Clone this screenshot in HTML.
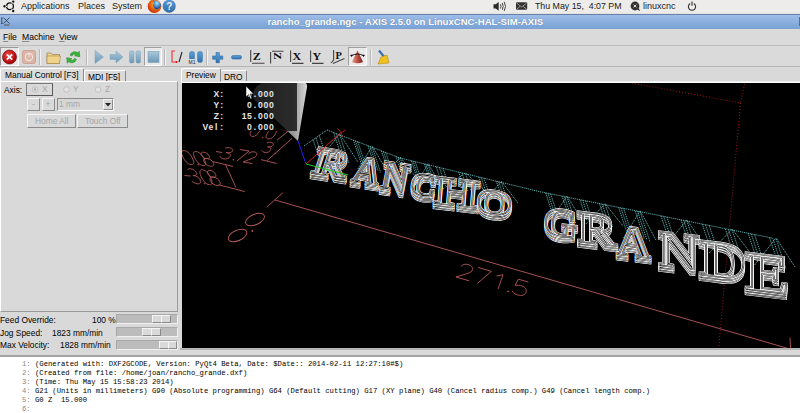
<!DOCTYPE html>
<html><head><meta charset="utf-8">
<style>
*{margin:0;padding:0;box-sizing:border-box}
html,body{width:800px;height:413px;overflow:hidden;background:#d9d9d9;font-family:"Liberation Sans",sans-serif;position:relative}
.a{position:absolute;white-space:nowrap}
#panel{left:0;top:0;width:800px;height:14px;background:linear-gradient(#edecea 85%,#e2e0dc)}
#title{left:0;top:14px;width:800px;height:15px;background:linear-gradient(#9dbde8,#79a1d5);border-top:1px solid #6580aa}
#menu{left:0;top:29px;width:800px;height:17px;background:#dadada;border-bottom:1px solid #bdbdbd}
.pt{font-size:9px;color:#1a1a1a;top:0.6px}
.mt{font-size:8.6px;color:#000;top:3px}
.mt u{text-decoration:underline;text-decoration-color:#8a8a8a;text-underline-offset:1px}
#tb{left:0;top:46px;width:800px;height:21px;background:#dadada;border-bottom:1px solid #b5b5b5}
.sep{width:1px;height:16px;top:49px;background:#b8b8b8;border-right:1px solid #f4f4f4}
#code{left:0;top:357px;width:800px;height:56px;background:#fff}
.cl{white-space:pre;font-family:"Liberation Mono",monospace;font-size:7.23px;color:#000;left:35px;transform:scaleY(1.1);transform-origin:0 70%}
.ln{font-family:"Liberation Mono",monospace;font-size:7.23px;color:#888;left:22px;transform:scaleY(1.1);transform-origin:0 70%}
.tt{font-size:8.4px;color:#000}
.tg{font-size:8.4px;color:#a6a6a6}
.btn{border:1px solid;border-color:#f4f4f4 #8a8a8a #8a8a8a #f4f4f4;background:#d9d9d9}
.trough{background:#bcbcbc;border:1px solid;border-color:#a8a8a8 #f0f0f0 #f0f0f0 #a8a8a8}
.handle{background:#d9d9d9;border:1px solid;border-color:#f4f4f4 #8a8a8a #8a8a8a #f4f4f4}
</style></head><body>
<div id="panel" class="a"></div>
<div class="a pt" style="left:21px">Applications</div>
<div class="a pt" style="left:78px">Places</div>
<div class="a pt" style="left:112px">System</div>
<div class="a pt" style="left:535px;font-size:8.8px;top:0.8px">Thu May 15,&nbsp; 4:07 PM</div>
<div class="a pt" style="left:643px">linuxcnc</div>
<div id="title" class="a"></div>
<div class="a" style="left:267.5px;top:16px;font-size:9.6px;font-weight:bold;color:#fff;text-shadow:0 0 1px rgba(40,60,100,0.5)">rancho_grande.ngc - AXIS 2.5.0 on LinuxCNC-HAL-SIM-AXIS</div>

<svg class="a" style="left:0;top:0" width="800" height="30">
<defs>
<radialGradient id="ff" cx="0.6" cy="0.35" r="0.7"><stop offset="0" stop-color="#ffd040"/><stop offset="0.5" stop-color="#f07010"/><stop offset="1" stop-color="#c02808"/></radialGradient>
<radialGradient id="gl" cx="0.5" cy="0.3" r="0.6"><stop offset="0" stop-color="#a0e8ff"/><stop offset="1" stop-color="#2050a0"/></radialGradient>
<linearGradient id="hb" x1="0" y1="0" x2="0" y2="1"><stop offset="0" stop-color="#5a9ad6"/><stop offset="1" stop-color="#2e6aa8"/></linearGradient>
</defs>
<circle cx="10" cy="6.3" r="3.4" fill="none" stroke="#111" stroke-width="1.3"/>
<circle cx="4.6" cy="6.3" r="1.2" fill="#111"/><circle cx="13.2" cy="1.6" r="1.2" fill="#111"/><circle cx="13.2" cy="11" r="1.2" fill="#111"/>
<path d="M7 6.3 h-1.3 M11.7 3.6 l0.7 -1.2 M11.7 9 l0.7 1.2" stroke="#edecea" stroke-width="1.2"/>
<circle cx="154.5" cy="6.2" r="6.8" fill="url(#ff)"/>
<path d="M153 0.5 Q161 0 161 6 Q160 9 157 9.5 Q154 9 153.5 6.5 Q152 5 154 3.5z" fill="url(#gl)"/>
<circle cx="169.2" cy="6.2" r="6.5" fill="url(#hb)"/>
<text x="169.2" y="10.3" text-anchor="middle" font-family="Liberation Sans" font-weight="bold" font-size="10" fill="#e8f0f8">?</text>
<path d="M493.5 4.3 h2.2 l3 -2.2 v8.6 l-3 -2.2 h-2.2z" fill="#2a2a2a"/>
<path d="M500.5 4.3 q1 2 0 4.2 M502.3 3 q1.8 3.4 0 6.8 M504.2 1.8 q2.6 4.6 0 9.2" fill="none" stroke="#333" stroke-width="0.9"/>
<rect x="516" y="2.2" width="11.2" height="7.6" rx="1" fill="#333"/>
<path d="M516.5 3 l5.1 4 l5.1 -4 M516.5 9.3 l3.6 -3 M526.7 9.3 l-3.6 -3" fill="none" stroke="#bbb" stroke-width="0.7"/>
<circle cx="635" cy="6" r="4.4" fill="#333"/><path d="M637 9.5 l3 1.5 l-1.2 -3z" fill="#333"/>
<path d="M633.6 4.6 l2.8 2.8 M636.4 4.6 l-2.8 2.8" stroke="#eee" stroke-width="0.9"/>
<path d="M690.2 3.6 a3.6 3.6 0 1 0 3.6 0" fill="none" stroke="#333" stroke-width="1.1"/><path d="M692 1.6 v4.2" stroke="#333" stroke-width="1.1"/>
<path d="M1.8 18 v5.5 M1 18 h1.6 M1 23.5 h1.6" stroke="#444" stroke-width="0.9"/>
<path d="M3.5 17.6 L9.5 23.6 M9.5 17.6 L3.5 23.6" stroke="#333" stroke-width="0.8"/>
<path d="M4 25 h5.5" stroke="#555" stroke-width="1"/>
</svg>
<div class="a" style="left:799px;top:17px;width:1px;height:9px;background:#4f6f9f"></div>
<div id="menu" class="a"></div>
<div class="a mt" style="left:3px;top:32px"><u>F</u>ile</div>
<div class="a mt" style="left:22px;top:32px"><u>M</u>achine</div>
<div class="a mt" style="left:59px;top:32px"><u>V</u>iew</div>
<div id="tb" class="a"></div>

<!-- toolbar -->
<div class="a" style="left:0;top:47px;width:19px;height:19px;border:1px solid;border-color:#9a9a9a #fff #fff #9a9a9a;background:#e6e6e6"></div>
<svg class="a" style="left:0;top:46px" width="400" height="21" viewBox="0 46 400 21">
<defs>
<radialGradient id="rg" cx="0.4" cy="0.35" r="0.7"><stop offset="0" stop-color="#f04040"/><stop offset="1" stop-color="#a00000"/></radialGradient>
<linearGradient id="bl" x1="0" y1="0" x2="0" y2="1"><stop offset="0" stop-color="#a9c8dc"/><stop offset="1" stop-color="#6d98b6"/></linearGradient>
<linearGradient id="bp" x1="0" y1="0" x2="0" y2="1"><stop offset="0" stop-color="#5aa0d8"/><stop offset="1" stop-color="#2f72b0"/></linearGradient>
<linearGradient id="fd" x1="0" y1="0" x2="0" y2="1"><stop offset="0" stop-color="#f3dca0"/><stop offset="1" stop-color="#c9a050"/></linearGradient>
<linearGradient id="cone" x1="0" y1="0" x2="1" y2="0"><stop offset="0" stop-color="#e0a090"/><stop offset="0.5" stop-color="#c05040"/><stop offset="1" stop-color="#702020"/></linearGradient>
</defs>
<!-- estop -->
<circle cx="9.5" cy="57" r="7" fill="url(#rg)" stroke="#600" stroke-width="0.6"/>
<path d="M6.8 54.3 L12.2 59.7 M12.2 54.3 L6.8 59.7" stroke="#fff" stroke-width="1.8"/>
<!-- power -->
<rect x="22.5" y="50.5" width="13" height="13" rx="2" fill="#dcb5a8" stroke="#c9a396"/>
<circle cx="29" cy="57" r="3.6" fill="none" stroke="#f3e3dd" stroke-width="1.1"/>
<path d="M29 53.3 V57.3" stroke="#f3e3dd" stroke-width="1.1"/>
<!-- sep -->
<rect x="39" y="49" width="1" height="16" fill="#b8b8b8"/><rect x="40" y="49" width="1" height="16" fill="#f2f2f2"/>
<!-- folder -->
<path d="M47 53 h4 l1.5 1.5 h7 v9 h-12.5z" fill="url(#fd)" stroke="#9a7a3a" stroke-width="0.7"/>
<path d="M47 56 h13.5 l-1 7.5 h-12.5z" fill="#f0d48c" stroke="#9a7a3a" stroke-width="0.5"/>
<!-- reload -->
<path d="M70 55 a5 5 0 0 1 8 -2 l1.2 -1.8 l0.6 5.6 l-5.2 -1 l1.6 -1.3 a3 3 0 0 0 -4.3 1.6z" fill="#3ab83a" stroke="#1a7a1a" stroke-width="0.5"/>
<path d="M76.5 59.5 a5 5 0 0 1 -8 2 l-1.2 1.8 l-0.6 -5.6 l5.2 1 l-1.6 1.3 a3 3 0 0 0 4.3 -1.6z" fill="#3ab83a" stroke="#1a7a1a" stroke-width="0.5"/>
<rect x="86" y="49" width="1" height="16" fill="#b8b8b8"/><rect x="87" y="49" width="1" height="16" fill="#f2f2f2"/>
<!-- play -->
<path d="M95 50.5 L103.5 57 L95 63.5z" fill="url(#bl)" stroke="#7aa0b8" stroke-width="0.5"/>
<!-- step arrow -->
<path d="M110 54.5 h6 v-3.5 l7 6 l-7 6 v-3.5 h-6z" fill="url(#bl)" stroke="#7aa0b8" stroke-width="0.5"/>
<!-- pause -->
<rect x="129.5" y="51" width="4.5" height="12" rx="1.2" fill="url(#bl)" stroke="#7aa0b8" stroke-width="0.5"/>
<rect x="136" y="51" width="4.5" height="12" rx="1.2" fill="url(#bl)" stroke="#7aa0b8" stroke-width="0.5"/>
<!-- stop sunken -->
<rect x="144.5" y="47.5" width="17" height="18" fill="#eaeaea" stroke="#a0a0a0"/>
<path d="M161.5 47.5 V65.5 H144.5" fill="none" stroke="#fff"/>
<rect x="148" y="51.5" width="11" height="11" fill="url(#bl)" stroke="#7aa0b8" stroke-width="0.6"/>
<rect x="164" y="49" width="1" height="16" fill="#b8b8b8"/><rect x="165" y="49" width="1" height="16" fill="#f2f2f2"/>
<!-- block delete -->
<path d="M175 51 h-3 v11 h4" fill="none" stroke="#f03030" stroke-width="1.1"/>
<circle cx="176.5" cy="62" r="1" fill="#e00"/>
<path d="M179 62 L182 52" stroke="#222" stroke-width="1.1"/>
<!-- M1 -->
<rect x="189.5" y="51.5" width="5" height="10" rx="2" fill="url(#bp)" stroke="#3a78b0" stroke-width="0.5"/>
<rect x="197.5" y="51.5" width="5" height="11" rx="2" fill="url(#bp)" stroke="#3a78b0" stroke-width="0.5"/>
<rect x="188.5" y="59" width="8.5" height="5" fill="#dadada"/>
<text x="188.6" y="63.6" font-size="5" font-family="Liberation Sans" fill="#222">M1</text>
<rect x="206" y="49" width="1" height="16" fill="#b8b8b8"/><rect x="207" y="49" width="1" height="16" fill="#f2f2f2"/>
<!-- plus -->
<path d="M216 52.5 h3.4 v3.4 h3.4 v3.4 h-3.4 v3.4 h-3.4 v-3.4 h-3.4 v-3.4 h3.4z" fill="url(#bp)" stroke="#24609a" stroke-width="0.5" stroke-linejoin="round"/>
<!-- minus -->
<rect x="231.5" y="55.5" width="10" height="3.6" rx="1.5" fill="url(#bp)" stroke="#24609a" stroke-width="0.5"/>
<g fill="none" stroke="#444" stroke-width="1.1">
<path d="M250.7 50 V62 M252 63.3 H264.5"/>
<path d="M270.6 52 V63.5 M272 51.3 H283.5"/>
<path d="M290.6 50.5 V62 M292 63.4 H303.5"/>
<path d="M310.6 50.5 V62 M312 63.4 H323.5"/>
<path d="M333.6 50 V60 L331 63"/>
<path d="M333 63.5 L344.5 58.5"/>
</g>
<g font-family="Liberation Serif" font-weight="bold" fill="#111">
<text x="252.8" y="60.4" font-size="12px" transform="translate(252.8 60.4) scale(1.0 0.95) translate(-252.8 -60.4)">Z</text>
<text x="272.2" y="61" font-size="11px" transform="rotate(90 277.5 57.5)">Z</text>
<text x="292.4" y="60.4" font-size="12px" transform="translate(292.4 60.4) scale(1.0 0.95) translate(-292.4 -60.4)">X</text>
<text x="312.4" y="60.4" font-size="12px" transform="translate(312.4 60.4) scale(1.0 0.95) translate(-312.4 -60.4)">Y</text>
<text x="335.5" y="59.5" font-size="11px" transform="translate(335.5 59.5) scale(0.95 0.93) translate(-335.5 -59.5)">P</text>
</g>
<!-- rotate view sunken -->
<rect x="348.5" y="47.5" width="18" height="18" fill="#eaeaea" stroke="#a0a0a0"/>
<path d="M366.5 47.5 V65.5 H348.5" fill="none" stroke="#fff"/>
<path d="M357.5 50.5 L363 62 Q357.5 64.5 352 62z" fill="url(#cone)"/>
<path d="M351 56 Q357.5 52 364 56" fill="none" stroke="#111" stroke-width="1"/>
<path d="M350 55 l1.5 2 l1 -2.5z M365 55 l-1.5 2 l-1 -2.5z" fill="#111"/>
<rect x="370" y="49" width="1" height="16" fill="#b8b8b8"/><rect x="371" y="49" width="1" height="16" fill="#f2f2f2"/>
<!-- clear -->
<path d="M379 50.5 L385 58" stroke="#3a70b0" stroke-width="2.2"/>
<path d="M381 57 L387 55 L389 63 L378 64z" fill="#f0c020" stroke="#b08000" stroke-width="0.5"/>
</svg>

<!-- tabs left -->
<div class="a" style="left:0;top:68px;width:84px;height:14px;background:#dcdcdc;border:1px solid;border-color:#fff #8a8a8a #d9d9d9 #fff;border-radius:2px 2px 0 0"></div>
<div class="a tt" style="left:5px;top:70px">Manual Control [F3]</div>
<div class="a" style="left:84px;top:70px;width:42px;height:12px;border:1px solid;border-color:#fff #8a8a8a #fff #fff;border-bottom:none;border-radius:2px 2px 0 0"></div>
<div class="a tt" style="left:88px;top:72px">MDI [F5]</div>
<!-- left panel frame -->
<div class="a" style="left:0;top:81px;width:178px;height:231px;border:1px solid;border-color:#fff #9a9a9a #9a9a9a #fff"></div>
<div class="a tt" style="left:4px;top:84.5px">Axis:</div>
<div class="a" style="left:26px;top:83px;width:27px;height:13px;border:1px solid #7a7a7a;border-right-color:#5a5a5a;border-bottom-color:#5a5a5a"></div>
<svg class="a" style="left:0;top:80px" width="180" height="50" viewBox="0 80 180 50">
<circle cx="35" cy="89.5" r="2.8" fill="#e4e4e4" stroke="#b8b8b8" stroke-width="0.8"/><circle cx="35" cy="89.5" r="1.2" fill="#a8a8a8"/>
<circle cx="66.5" cy="89.5" r="2.8" fill="#e4e4e4" stroke="#b8b8b8" stroke-width="0.8"/>
<circle cx="98" cy="89.5" r="2.8" fill="#e4e4e4" stroke="#b8b8b8" stroke-width="0.8"/>
</svg>
<div class="a tg" style="left:42px;top:84px">X</div>
<div class="a tg" style="left:73px;top:84px">Y</div>
<div class="a tg" style="left:105px;top:84px">Z</div>
<div class="a btn" style="left:27px;top:98px;width:13px;height:13px"></div>
<div class="a tg" style="left:32px;top:99px">-</div>
<div class="a btn" style="left:42px;top:98px;width:13px;height:13px"></div>
<div class="a tg" style="left:45.5px;top:99px">+</div>
<div class="a" style="left:57px;top:98px;width:57px;height:13px;border:1px solid;border-color:#8a8a8a #fff #fff #8a8a8a;background:#d6d6d6"></div>
<div class="a tg" style="left:59px;top:99px">1 mm</div>
<div class="a btn" style="left:103px;top:99px;width:10px;height:11px"></div>
<svg class="a" style="left:104px;top:102px" width="8" height="5"><path d="M1 1h6l-3 3.5z" fill="#222"/></svg>
<div class="a btn" style="left:27px;top:114px;width:49px;height:14px"></div>
<div class="a tg" style="left:35px;top:115.5px">Home All</div>
<div class="a btn" style="left:77px;top:114px;width:51px;height:14px"></div>
<div class="a tg" style="left:85px;top:115.5px">Touch Off</div>
<!-- sliders -->
<div class="a tt" style="left:0;top:314.6px">Feed Override:</div>
<div class="a tt" style="left:92px;top:314.6px">100 %</div>
<div class="a tt" style="left:0;top:327.6px">Jog Speed:</div>
<div class="a tt" style="left:52px;top:327.6px">1823 mm/min</div>
<div class="a tt" style="left:0;top:340.4px">Max Velocity:</div>
<div class="a tt" style="left:60px;top:340.4px">1828 mm/min</div>
<div class="a trough" style="left:116px;top:314px;width:62px;height:10px"></div>
<div class="a handle" style="left:152px;top:315px;width:10px;height:8px"></div>
<div class="a handle" style="left:161px;top:315px;width:10px;height:8px"></div>
<div class="a trough" style="left:116px;top:327px;width:62px;height:10px"></div>
<div class="a handle" style="left:142px;top:328px;width:10px;height:8px"></div>
<div class="a handle" style="left:151px;top:328px;width:10px;height:8px"></div>
<div class="a trough" style="left:116px;top:340px;width:62px;height:10px"></div>
<div class="a handle" style="left:159px;top:341px;width:10px;height:8px"></div>
<div class="a handle" style="left:168px;top:341px;width:9px;height:8px"></div>
<!-- right tabs -->
<div class="a" style="left:181px;top:68px;width:40px;height:14px;background:#dcdcdc;border:1px solid;border-color:#fff #8a8a8a #dcdcdc #fff;border-radius:3px 2px 0 0"></div>
<div class="a tt" style="left:186px;top:70px">Preview</div>
<div class="a" style="left:221px;top:70px;width:26px;height:12px;border:1px solid;border-color:#fff #8a8a8a #fff #fff;border-bottom:none;border-left:none;border-radius:0 2px 0 0"></div>
<div class="a tt" style="left:224px;top:72px">DRO</div>
<div class="a" style="left:221px;top:81px;width:579px;height:1px;background:#f0f0f0"></div>
<div class="a" style="left:181px;top:82px;width:619px;height:1px;background:#fff"></div>
<!-- sash -->
<div class="a" style="left:180px;top:348px;width:620px;height:2px;background:#b5b5b5"></div>
<div class="a" style="left:0;top:350px;width:800px;height:5px;background:#d9d9d9"></div>
<div class="a" style="left:0;top:355px;width:800px;height:2px;background:#a4a4a4"></div>
<svg class="a" style="left:182px;top:83px;background:#000" width="618" height="265" viewBox="182 83 618 265">
<g stroke="#b85a5a" stroke-width="0.9" fill="none">
<path d="M275 200 L790 349"/>
<path d="M266.7 207.2 L282.9 192.7"/>
<path d="M790 337.7 L790.5 348"/>
</g>
<g stroke="#a01818" stroke-width="1" fill="none" stroke-dasharray="1 2">
<path d="M626 82 L740.5 103 L745 82 M740.5 103 L718.7 348"/>
</g>
<g stroke="#b85a5a" stroke-width="0.9" fill="none"><path transform="matrix(22.000 6.400 5.000 -14.500 456.00 277.00)" d="M0.05 0.75 C0.1 0.95 0.25 1 0.32 1 C0.5 1 0.58 0.88 0.58 0.73 C0.58 0.55 0.4 0.42 0 0 L0.6 0" vector-effect="non-scaling-stroke"/><path transform="matrix(22.000 6.400 5.000 -14.500 473.16 281.99)" d="M0 1 L0.6 1 L0.2 0" vector-effect="non-scaling-stroke"/><path transform="matrix(22.000 6.400 5.000 -14.500 490.32 286.98)" d="M0.1 0.8 L0.35 1 L0.35 0" vector-effect="non-scaling-stroke"/><path transform="matrix(22.000 6.400 5.000 -14.500 501.32 290.18)" d="M0.3 0.02 a0.03 0.03 0 1 0 0.001 0" vector-effect="non-scaling-stroke"/><path transform="matrix(22.000 6.400 5.000 -14.500 511.22 293.06)" d="M0.55 1 L0.1 1 L0.05 0.55 C0.15 0.62 0.25 0.64 0.32 0.64 C0.5 0.64 0.6 0.5 0.6 0.32 C0.6 0.12 0.48 0 0.3 0 C0.15 0 0.05 0.08 0 0.15" vector-effect="non-scaling-stroke"/></g>
<g stroke="#b85a5a" stroke-width="0.9" fill="none"><ellipse cx="237.5" cy="235.5" rx="10" ry="5.2" transform="rotate(-24 237.5 235.5)"/><ellipse cx="255" cy="219.5" rx="10" ry="5.2" transform="rotate(-24 255 219.5)"/></g>
<circle cx="252.3" cy="231" r="0.9" fill="#b85a5a"/>
<g stroke="#b85a5a" stroke-width="0.9" fill="none"><path transform="matrix(15.520 1.280 -7.000 -15.000 188.00 183.00)" d="M0 0.5 L0.4 0.5" vector-effect="non-scaling-stroke"/><path transform="matrix(15.520 1.280 -7.000 -15.000 192.85 183.40)" d="M0.05 0.9 C0.15 1 0.25 1 0.3 1 C0.5 1 0.57 0.88 0.57 0.76 C0.57 0.62 0.45 0.55 0.25 0.55 C0.5 0.55 0.6 0.42 0.6 0.28 C0.6 0.1 0.48 0 0.3 0 C0.15 0 0.05 0.08 0 0.15" vector-effect="non-scaling-stroke"/><path transform="matrix(15.520 1.280 -7.000 -15.000 200.42 184.02)" d="M0.3 0.02 a0.03 0.03 0 1 0 0.001 0" vector-effect="non-scaling-stroke"/><path transform="matrix(15.520 1.280 -7.000 -15.000 204.78 184.38)" d="M0.3 0 C0.05 0 0 0.3 0 0.5 C0 0.7 0.05 1 0.3 1 C0.55 1 0.6 0.7 0.6 0.5 C0.6 0.3 0.55 0 0.3 0Z" vector-effect="non-scaling-stroke"/><path transform="matrix(15.520 1.280 -7.000 -15.000 212.35 185.01)" d="M0.3 0.55 C0.1 0.55 0.05 0.65 0.05 0.77 C0.05 0.92 0.17 1 0.3 1 C0.43 1 0.55 0.92 0.55 0.77 C0.55 0.65 0.5 0.55 0.3 0.55 C0.1 0.55 0 0.42 0 0.28 C0 0.1 0.12 0 0.3 0 C0.48 0 0.6 0.1 0.6 0.28 C0.6 0.42 0.5 0.55 0.3 0.55Z" vector-effect="non-scaling-stroke"/></g>
<g stroke="#b85a5a" stroke-width="0.9" fill="none"><path transform="matrix(15.520 1.280 -7.000 -14.000 186.50 164.20)" d="M0.3 0 C0.05 0 0 0.3 0 0.5 C0 0.7 0.05 1 0.3 1 C0.55 1 0.6 0.7 0.6 0.5 C0.6 0.3 0.55 0 0.3 0Z" vector-effect="non-scaling-stroke"/><path transform="matrix(15.520 1.280 -7.000 -14.000 194.07 164.82)" d="M0.3 0.02 a0.03 0.03 0 1 0 0.001 0" vector-effect="non-scaling-stroke"/><path transform="matrix(15.520 1.280 -7.000 -14.000 198.43 165.18)" d="M0.3 0 C0.05 0 0 0.3 0 0.5 C0 0.7 0.05 1 0.3 1 C0.55 1 0.6 0.7 0.6 0.5 C0.6 0.3 0.55 0 0.3 0Z" vector-effect="non-scaling-stroke"/><path transform="matrix(15.520 1.280 -7.000 -14.000 206.00 165.81)" d="M0.3 0.55 C0.1 0.55 0.05 0.65 0.05 0.77 C0.05 0.92 0.17 1 0.3 1 C0.43 1 0.55 0.92 0.55 0.77 C0.55 0.65 0.5 0.55 0.3 0.55 C0.1 0.55 0 0.42 0 0.28 C0 0.1 0.12 0 0.3 0 C0.48 0 0.6 0.1 0.6 0.28 C0.6 0.42 0.5 0.55 0.3 0.55Z" vector-effect="non-scaling-stroke"/></g>
<g stroke="#b85a5a" stroke-width="0.9" fill="none"><path transform="matrix(15.600 2.600 6.000 -11.000 213.00 157.00)" d="M0 0.5 L0.4 0.5" vector-effect="non-scaling-stroke"/><path transform="matrix(15.600 2.600 6.000 -11.000 219.00 158.00)" d="M0.05 0.9 C0.15 1 0.25 1 0.3 1 C0.5 1 0.57 0.88 0.57 0.76 C0.57 0.62 0.45 0.55 0.25 0.55 C0.5 0.55 0.6 0.42 0.6 0.28 C0.6 0.1 0.48 0 0.3 0 C0.15 0 0.05 0.08 0 0.15" vector-effect="non-scaling-stroke"/><path transform="matrix(15.600 2.600 6.000 -11.000 228.36 159.56)" d="M0.3 0.02 a0.03 0.03 0 1 0 0.001 0" vector-effect="non-scaling-stroke"/><path transform="matrix(15.600 2.600 6.000 -11.000 233.76 160.46)" d="M0 1 L0.6 1 L0.2 0" vector-effect="non-scaling-stroke"/><path transform="matrix(15.600 2.600 6.000 -11.000 243.12 162.02)" d="M0.05 0.75 C0.1 0.95 0.25 1 0.32 1 C0.5 1 0.58 0.88 0.58 0.73 C0.58 0.55 0.4 0.42 0 0 L0.6 0" vector-effect="non-scaling-stroke"/></g>
<g stroke="#b85a5a" stroke-width="0.9" fill="none"><path transform="matrix(13.000 2.000 6.000 -10.000 241.80 134.80)" d="M0 0.5 L0.4 0.5" vector-effect="non-scaling-stroke"/><path transform="matrix(13.000 2.000 6.000 -10.000 248.30 135.80)" d="M0.3 0 C0.05 0 0 0.3 0 0.5 C0 0.7 0.05 1 0.3 1 C0.55 1 0.6 0.7 0.6 0.5 C0.6 0.3 0.55 0 0.3 0Z" vector-effect="non-scaling-stroke"/><path transform="matrix(13.000 2.000 6.000 -10.000 258.44 137.36)" d="M0.3 0.02 a0.03 0.03 0 1 0 0.001 0" vector-effect="non-scaling-stroke"/><path transform="matrix(13.000 2.000 6.000 -10.000 264.29 138.26)" d="M0.3 0 C0.05 0 0 0.3 0 0.5 C0 0.7 0.05 1 0.3 1 C0.55 1 0.6 0.7 0.6 0.5 C0.6 0.3 0.55 0 0.3 0Z" vector-effect="non-scaling-stroke"/><path transform="matrix(13.000 2.000 6.000 -10.000 274.43 139.82)" d="M0 1 L0.6 1 L0.2 0" vector-effect="non-scaling-stroke"/></g>
<g stroke="#b85a5a" stroke-width="0.9" fill="none"><path transform="matrix(13.000 2.000 6.000 -10.000 261.00 151.80)" d="M0.05 0.9 C0.15 1 0.25 1 0.3 1 C0.5 1 0.57 0.88 0.57 0.76 C0.57 0.62 0.45 0.55 0.25 0.55 C0.5 0.55 0.6 0.42 0.6 0.28 C0.6 0.1 0.48 0 0.3 0 C0.15 0 0.05 0.08 0 0.15" vector-effect="non-scaling-stroke"/><path transform="matrix(13.000 2.000 6.000 -10.000 271.14 153.36)" d="M0.3 0.02 a0.03 0.03 0 1 0 0.001 0" vector-effect="non-scaling-stroke"/></g>
<g stroke="#b85a5a" stroke-width="0.9" fill="none"><path d="M292 138.4 L267 160.6 M261 159.6 L276.7 163.5 M213 161.6 L233 166.4 M225.5 164.5 L236 187.7 M218.7 184.8 L244.8 191.6"/></g>
<g stroke="#68baba" stroke-width="0.9" fill="none" stroke-dasharray="1.2 0.8">
<path d="M304 146 L327 130 L400 158 L540 191.7 L772 238"/>
<path d="M313.1 139.7 L318.4 156.0"/>
<path d="M315.9 137.7 L322.5 157.5"/>
<path d="M319.2 135.4 L327.0 159.0"/>
<path d="M333.6 132.5 L342.8 160.5"/>
<path d="M336.4 133.6 L345.8 162.0"/>
<path d="M339.7 134.9 L349.1 163.5"/>
<path d="M319.2 160.0 L339.7 133.9 L358.0 162.0"/>
<path d="M353.4 140.1 L361.7 165.0"/>
<path d="M355.5 140.9 L363.9 166.5"/>
<path d="M357.8 141.8 L366.4 168.0"/>
<path d="M367.9 145.7 L375.8 169.5"/>
<path d="M370.0 146.5 L378.1 171.0"/>
<path d="M372.3 147.4 L380.6 172.5"/>
<path d="M357.8 169.0 L372.3 146.4 L387.0 171.0"/>
<path d="M381.4 150.9 L387.8 170.0"/>
<path d="M383.5 151.7 L390.0 171.5"/>
<path d="M385.8 152.6 L392.5 173.0"/>
<path d="M395.9 156.4 L401.9 174.5"/>
<path d="M398.0 157.2 L404.2 176.0"/>
<path d="M400.3 158.1 L406.7 177.5"/>
<path d="M385.8 174.0 L400.3 157.1 L415.0 176.0"/>
<path d="M411.3 160.7 L418.0 181.0"/>
<path d="M413.1 161.1 L420.2 182.5"/>
<path d="M415.2 161.6 L422.6 184.0"/>
<path d="M424.3 163.8 L431.5 185.5"/>
<path d="M426.1 164.3 L433.6 187.0"/>
<path d="M428.2 164.8 L436.0 188.5"/>
<path d="M415.2 185.0 L428.2 163.8 L442.0 187.0"/>
<path d="M436.2 166.7 L442.3 185.0"/>
<path d="M439.4 167.5 L445.7 186.5"/>
<path d="M443.0 168.3 L449.5 188.0"/>
<path d="M458.8 172.1 L464.5 189.5"/>
<path d="M461.9 172.9 L467.9 191.0"/>
<path d="M465.5 173.7 L471.7 192.5"/>
<path d="M443.0 189.0 L465.5 172.7 L485.0 191.0"/>
<path d="M478.8 176.9 L485.4 197.0"/>
<path d="M481.2 177.5 L488.1 198.5"/>
<path d="M484.0 178.2 L491.2 200.0"/>
<path d="M496.2 181.1 L503.0 201.5"/>
<path d="M498.7 181.7 L505.7 203.0"/>
<path d="M501.5 182.4 L508.8 204.5"/>
<path d="M484.0 201.0 L501.5 181.4 L518.0 203.0"/>
<path d="M545.6 192.8 L553.3 216.0"/>
<path d="M548.0 193.3 L555.9 217.5"/>
<path d="M550.6 193.8 L558.9 219.0"/>
<path d="M562.1 196.1 L570.2 220.5"/>
<path d="M564.5 196.6 L572.8 222.0"/>
<path d="M567.1 197.1 L575.8 223.5"/>
<path d="M550.6 220.0 L567.1 196.1 L583.0 222.0"/>
<path d="M580.0 199.7 L586.7 220.0"/>
<path d="M582.7 200.2 L589.7 221.5"/>
<path d="M585.8 200.9 L593.1 223.0"/>
<path d="M599.5 203.6 L606.4 224.5"/>
<path d="M602.2 204.1 L609.4 226.0"/>
<path d="M605.3 204.8 L612.8 227.5"/>
<path d="M585.8 224.0 L605.3 203.8 L623.0 226.0"/>
<path d="M618.6 207.4 L627.4 234.0"/>
<path d="M621.0 207.9 L630.1 235.5"/>
<path d="M623.6 208.4 L633.0 237.0"/>
<path d="M635.1 210.7 L644.3 238.5"/>
<path d="M637.5 211.2 L647.0 240.0"/>
<path d="M640.1 211.7 L649.9 241.5"/>
<path d="M623.6 238.0 L640.1 210.7 L656.0 240.0"/>
<path d="M661.0 215.9 L669.0 240.0"/>
<path d="M663.8 216.5 L672.1 241.5"/>
<path d="M667.0 217.1 L675.5 243.0"/>
<path d="M681.0 219.9 L689.1 244.5"/>
<path d="M683.8 220.5 L692.2 246.0"/>
<path d="M687.0 221.1 L695.7 247.5"/>
<path d="M667.0 244.0 L687.0 220.1 L705.0 246.0"/>
<path d="M702.3 224.2 L710.5 249.0"/>
<path d="M705.5 224.8 L714.0 250.5"/>
<path d="M709.2 225.5 L717.9 252.0"/>
<path d="M725.3 228.8 L733.5 253.5"/>
<path d="M728.5 229.4 L737.0 255.0"/>
<path d="M732.2 230.1 L740.9 256.5"/>
<path d="M709.2 253.0 L732.2 229.1 L752.0 255.0"/>
<path d="M748.1 233.3 L757.3 261.0"/>
<path d="M751.2 233.9 L760.6 262.5"/>
<path d="M754.6 234.6 L764.3 264.0"/>
<path d="M769.6 237.6 L778.8 265.5"/>
<path d="M772.7 238.2 L782.2 267.0"/>
<path d="M776.1 238.9 L785.9 268.5"/>
<path d="M754.6 265.0 L776.1 237.9 L795.0 267.0"/>
</g>
<g font-family="Liberation Serif" font-weight="bold" font-size="100" fill="none">
<g transform="matrix(0.4658 0.0699 -0.1231 0.3862 310.53 177.83)"><g stroke="#fff" stroke-width="3.0"><text x="0" y="0" vector-effect="non-scaling-stroke">R</text></g><g stroke="#000" stroke-width="1.6"><text x="0" y="0" vector-effect="non-scaling-stroke">R</text></g><g stroke="#fff" stroke-width="0.5"><text x="0" y="0" vector-effect="non-scaling-stroke">R</text></g></g><g transform="matrix(0.4658 0.0699 -0.1231 0.3862 310.53 175.43)"><g stroke="#fff" stroke-width="3.0"><text x="0" y="0" vector-effect="non-scaling-stroke">R</text></g><g stroke="#000" stroke-width="1.6"><text x="0" y="0" vector-effect="non-scaling-stroke">R</text></g><g stroke="#fff" stroke-width="0.5"><text x="0" y="0" vector-effect="non-scaling-stroke">R</text></g></g><g transform="matrix(0.4658 0.0699 -0.1231 0.3862 310.53 173.03)"><g stroke="#fff" stroke-width="3.0"><text x="0" y="0" vector-effect="non-scaling-stroke">R</text></g><g stroke="#000" stroke-width="1.6"><text x="0" y="0" vector-effect="non-scaling-stroke">R</text></g><g stroke="#fff" stroke-width="0.5"><text x="0" y="0" vector-effect="non-scaling-stroke">R</text></g></g>
<g transform="matrix(0.3611 0.0542 -0.0909 0.3682 351.00 186.10)"><g stroke="#fff" stroke-width="3.0"><text x="0" y="0" vector-effect="non-scaling-stroke">A</text></g><g stroke="#000" stroke-width="1.6"><text x="0" y="0" vector-effect="non-scaling-stroke">A</text></g><g stroke="#fff" stroke-width="0.5"><text x="0" y="0" vector-effect="non-scaling-stroke">A</text></g></g><g transform="matrix(0.3611 0.0542 -0.0909 0.3682 351.00 183.70)"><g stroke="#fff" stroke-width="3.0"><text x="0" y="0" vector-effect="non-scaling-stroke">A</text></g><g stroke="#000" stroke-width="1.6"><text x="0" y="0" vector-effect="non-scaling-stroke">A</text></g><g stroke="#fff" stroke-width="0.5"><text x="0" y="0" vector-effect="non-scaling-stroke">A</text></g></g><g transform="matrix(0.3611 0.0542 -0.0909 0.3682 351.00 181.30)"><g stroke="#fff" stroke-width="3.0"><text x="0" y="0" vector-effect="non-scaling-stroke">A</text></g><g stroke="#000" stroke-width="1.6"><text x="0" y="0" vector-effect="non-scaling-stroke">A</text></g><g stroke="#fff" stroke-width="0.5"><text x="0" y="0" vector-effect="non-scaling-stroke">A</text></g></g>
<g transform="matrix(0.3521 0.0528 -0.0769 0.4069 379.65 193.20)"><g stroke="#fff" stroke-width="3.0"><text x="0" y="0" vector-effect="non-scaling-stroke">N</text></g><g stroke="#000" stroke-width="1.6"><text x="0" y="0" vector-effect="non-scaling-stroke">N</text></g><g stroke="#fff" stroke-width="0.5"><text x="0" y="0" vector-effect="non-scaling-stroke">N</text></g></g><g transform="matrix(0.3521 0.0528 -0.0769 0.4069 379.65 190.80)"><g stroke="#fff" stroke-width="3.0"><text x="0" y="0" vector-effect="non-scaling-stroke">N</text></g><g stroke="#000" stroke-width="1.6"><text x="0" y="0" vector-effect="non-scaling-stroke">N</text></g><g stroke="#fff" stroke-width="0.5"><text x="0" y="0" vector-effect="non-scaling-stroke">N</text></g></g><g transform="matrix(0.3521 0.0528 -0.0769 0.4069 379.65 188.40)"><g stroke="#fff" stroke-width="3.0"><text x="0" y="0" vector-effect="non-scaling-stroke">N</text></g><g stroke="#000" stroke-width="1.6"><text x="0" y="0" vector-effect="non-scaling-stroke">N</text></g><g stroke="#fff" stroke-width="0.5"><text x="0" y="0" vector-effect="non-scaling-stroke">N</text></g></g>
<g transform="matrix(0.3529 0.0424 -0.0455 0.3230 409.29 199.04)"><g stroke="#fff" stroke-width="3.0"><text x="0" y="0" vector-effect="non-scaling-stroke">C</text></g><g stroke="#000" stroke-width="1.6"><text x="0" y="0" vector-effect="non-scaling-stroke">C</text></g><g stroke="#fff" stroke-width="0.5"><text x="0" y="0" vector-effect="non-scaling-stroke">C</text></g></g><g transform="matrix(0.3529 0.0424 -0.0455 0.3230 409.29 196.64)"><g stroke="#fff" stroke-width="3.0"><text x="0" y="0" vector-effect="non-scaling-stroke">C</text></g><g stroke="#000" stroke-width="1.6"><text x="0" y="0" vector-effect="non-scaling-stroke">C</text></g><g stroke="#fff" stroke-width="0.5"><text x="0" y="0" vector-effect="non-scaling-stroke">C</text></g></g><g transform="matrix(0.3529 0.0424 -0.0455 0.3230 409.29 194.24)"><g stroke="#fff" stroke-width="3.0"><text x="0" y="0" vector-effect="non-scaling-stroke">C</text></g><g stroke="#000" stroke-width="1.6"><text x="0" y="0" vector-effect="non-scaling-stroke">C</text></g><g stroke="#fff" stroke-width="0.5"><text x="0" y="0" vector-effect="non-scaling-stroke">C</text></g></g>
<g transform="matrix(0.5658 0.0679 -0.0308 0.4006 433.43 207.77)"><g stroke="#fff" stroke-width="3.0"><text x="0" y="0" vector-effect="non-scaling-stroke">H</text></g><g stroke="#000" stroke-width="1.6"><text x="0" y="0" vector-effect="non-scaling-stroke">H</text></g><g stroke="#fff" stroke-width="0.5"><text x="0" y="0" vector-effect="non-scaling-stroke">H</text></g></g><g transform="matrix(0.5658 0.0679 -0.0308 0.4006 433.43 205.37)"><g stroke="#fff" stroke-width="3.0"><text x="0" y="0" vector-effect="non-scaling-stroke">H</text></g><g stroke="#000" stroke-width="1.6"><text x="0" y="0" vector-effect="non-scaling-stroke">H</text></g><g stroke="#fff" stroke-width="0.5"><text x="0" y="0" vector-effect="non-scaling-stroke">H</text></g></g><g transform="matrix(0.5658 0.0679 -0.0308 0.4006 433.43 202.97)"><g stroke="#fff" stroke-width="3.0"><text x="0" y="0" vector-effect="non-scaling-stroke">H</text></g><g stroke="#000" stroke-width="1.6"><text x="0" y="0" vector-effect="non-scaling-stroke">H</text></g><g stroke="#fff" stroke-width="0.5"><text x="0" y="0" vector-effect="non-scaling-stroke">H</text></g></g>
<g transform="matrix(0.4595 0.0551 -0.0152 0.3503 476.08 216.81)"><g stroke="#fff" stroke-width="3.0"><text x="0" y="0" vector-effect="non-scaling-stroke">O</text></g><g stroke="#000" stroke-width="1.6"><text x="0" y="0" vector-effect="non-scaling-stroke">O</text></g><g stroke="#fff" stroke-width="0.5"><text x="0" y="0" vector-effect="non-scaling-stroke">O</text></g></g><g transform="matrix(0.4595 0.0551 -0.0152 0.3503 476.08 214.41)"><g stroke="#fff" stroke-width="3.0"><text x="0" y="0" vector-effect="non-scaling-stroke">O</text></g><g stroke="#000" stroke-width="1.6"><text x="0" y="0" vector-effect="non-scaling-stroke">O</text></g><g stroke="#fff" stroke-width="0.5"><text x="0" y="0" vector-effect="non-scaling-stroke">O</text></g></g><g transform="matrix(0.4595 0.0551 -0.0152 0.3503 476.08 212.01)"><g stroke="#fff" stroke-width="3.0"><text x="0" y="0" vector-effect="non-scaling-stroke">O</text></g><g stroke="#000" stroke-width="1.6"><text x="0" y="0" vector-effect="non-scaling-stroke">O</text></g><g stroke="#fff" stroke-width="0.5"><text x="0" y="0" vector-effect="non-scaling-stroke">O</text></g></g>
<g transform="matrix(0.4324 0.0519 -0.0152 0.3994 543.14 239.06)"><g stroke="#fff" stroke-width="3.0"><text x="0" y="0" vector-effect="non-scaling-stroke">G</text></g><g stroke="#000" stroke-width="1.6"><text x="0" y="0" vector-effect="non-scaling-stroke">G</text></g><g stroke="#fff" stroke-width="0.5"><text x="0" y="0" vector-effect="non-scaling-stroke">G</text></g></g><g transform="matrix(0.4324 0.0519 -0.0152 0.3994 543.14 236.66)"><g stroke="#fff" stroke-width="3.0"><text x="0" y="0" vector-effect="non-scaling-stroke">G</text></g><g stroke="#000" stroke-width="1.6"><text x="0" y="0" vector-effect="non-scaling-stroke">G</text></g><g stroke="#fff" stroke-width="0.5"><text x="0" y="0" vector-effect="non-scaling-stroke">G</text></g></g><g transform="matrix(0.4324 0.0519 -0.0152 0.3994 543.14 234.26)"><g stroke="#fff" stroke-width="3.0"><text x="0" y="0" vector-effect="non-scaling-stroke">G</text></g><g stroke="#000" stroke-width="1.6"><text x="0" y="0" vector-effect="non-scaling-stroke">G</text></g><g stroke="#fff" stroke-width="0.5"><text x="0" y="0" vector-effect="non-scaling-stroke">G</text></g></g>
<g transform="matrix(0.5342 0.0641 -0.0000 0.4542 577.47 246.26)"><g stroke="#fff" stroke-width="3.0"><text x="0" y="0" vector-effect="non-scaling-stroke">R</text></g><g stroke="#000" stroke-width="1.6"><text x="0" y="0" vector-effect="non-scaling-stroke">R</text></g><g stroke="#fff" stroke-width="0.5"><text x="0" y="0" vector-effect="non-scaling-stroke">R</text></g></g><g transform="matrix(0.5342 0.0641 -0.0000 0.4542 577.47 243.86)"><g stroke="#fff" stroke-width="3.0"><text x="0" y="0" vector-effect="non-scaling-stroke">R</text></g><g stroke="#000" stroke-width="1.6"><text x="0" y="0" vector-effect="non-scaling-stroke">R</text></g><g stroke="#fff" stroke-width="0.5"><text x="0" y="0" vector-effect="non-scaling-stroke">R</text></g></g><g transform="matrix(0.5342 0.0641 -0.0000 0.4542 577.47 241.46)"><g stroke="#fff" stroke-width="3.0"><text x="0" y="0" vector-effect="non-scaling-stroke">R</text></g><g stroke="#000" stroke-width="1.6"><text x="0" y="0" vector-effect="non-scaling-stroke">R</text></g><g stroke="#fff" stroke-width="0.5"><text x="0" y="0" vector-effect="non-scaling-stroke">R</text></g></g>
<g transform="matrix(0.4583 0.0550 -0.0000 0.4279 617.00 259.04)"><g stroke="#fff" stroke-width="3.0"><text x="0" y="0" vector-effect="non-scaling-stroke">A</text></g><g stroke="#000" stroke-width="1.6"><text x="0" y="0" vector-effect="non-scaling-stroke">A</text></g><g stroke="#fff" stroke-width="0.5"><text x="0" y="0" vector-effect="non-scaling-stroke">A</text></g></g><g transform="matrix(0.4583 0.0550 -0.0000 0.4279 617.00 256.64)"><g stroke="#fff" stroke-width="3.0"><text x="0" y="0" vector-effect="non-scaling-stroke">A</text></g><g stroke="#000" stroke-width="1.6"><text x="0" y="0" vector-effect="non-scaling-stroke">A</text></g><g stroke="#fff" stroke-width="0.5"><text x="0" y="0" vector-effect="non-scaling-stroke">A</text></g></g><g transform="matrix(0.4583 0.0550 -0.0000 0.4279 617.00 254.24)"><g stroke="#fff" stroke-width="3.0"><text x="0" y="0" vector-effect="non-scaling-stroke">A</text></g><g stroke="#000" stroke-width="1.6"><text x="0" y="0" vector-effect="non-scaling-stroke">A</text></g><g stroke="#fff" stroke-width="0.5"><text x="0" y="0" vector-effect="non-scaling-stroke">A</text></g></g>
<g transform="matrix(0.5634 0.0676 -0.0000 0.5138 658.44 270.13)"><g stroke="#fff" stroke-width="3.0"><text x="0" y="0" vector-effect="non-scaling-stroke">N</text></g><g stroke="#000" stroke-width="1.6"><text x="0" y="0" vector-effect="non-scaling-stroke">N</text></g><g stroke="#fff" stroke-width="0.5"><text x="0" y="0" vector-effect="non-scaling-stroke">N</text></g></g><g transform="matrix(0.5634 0.0676 -0.0000 0.5138 658.44 267.73)"><g stroke="#fff" stroke-width="3.0"><text x="0" y="0" vector-effect="non-scaling-stroke">N</text></g><g stroke="#000" stroke-width="1.6"><text x="0" y="0" vector-effect="non-scaling-stroke">N</text></g><g stroke="#fff" stroke-width="0.5"><text x="0" y="0" vector-effect="non-scaling-stroke">N</text></g></g><g transform="matrix(0.5634 0.0676 -0.0000 0.5138 658.44 265.33)"><g stroke="#fff" stroke-width="3.0"><text x="0" y="0" vector-effect="non-scaling-stroke">N</text></g><g stroke="#000" stroke-width="1.6"><text x="0" y="0" vector-effect="non-scaling-stroke">N</text></g><g stroke="#fff" stroke-width="0.5"><text x="0" y="0" vector-effect="non-scaling-stroke">N</text></g></g>
<g transform="matrix(0.6571 0.0789 -0.0000 0.5182 699.34 279.40)"><g stroke="#fff" stroke-width="3.0"><text x="0" y="0" vector-effect="non-scaling-stroke">D</text></g><g stroke="#000" stroke-width="1.6"><text x="0" y="0" vector-effect="non-scaling-stroke">D</text></g><g stroke="#fff" stroke-width="0.5"><text x="0" y="0" vector-effect="non-scaling-stroke">D</text></g></g><g transform="matrix(0.6571 0.0789 -0.0000 0.5182 699.34 277.00)"><g stroke="#fff" stroke-width="3.0"><text x="0" y="0" vector-effect="non-scaling-stroke">D</text></g><g stroke="#000" stroke-width="1.6"><text x="0" y="0" vector-effect="non-scaling-stroke">D</text></g><g stroke="#fff" stroke-width="0.5"><text x="0" y="0" vector-effect="non-scaling-stroke">D</text></g></g><g transform="matrix(0.6571 0.0789 -0.0000 0.5182 699.34 274.60)"><g stroke="#fff" stroke-width="3.0"><text x="0" y="0" vector-effect="non-scaling-stroke">D</text></g><g stroke="#000" stroke-width="1.6"><text x="0" y="0" vector-effect="non-scaling-stroke">D</text></g><g stroke="#fff" stroke-width="0.5"><text x="0" y="0" vector-effect="non-scaling-stroke">D</text></g></g>
<g transform="matrix(0.6615 0.0794 -0.0000 0.5545 745.34 293.76)"><g stroke="#fff" stroke-width="3.0"><text x="0" y="0" vector-effect="non-scaling-stroke">E</text></g><g stroke="#000" stroke-width="1.6"><text x="0" y="0" vector-effect="non-scaling-stroke">E</text></g><g stroke="#fff" stroke-width="0.5"><text x="0" y="0" vector-effect="non-scaling-stroke">E</text></g></g><g transform="matrix(0.6615 0.0794 -0.0000 0.5545 745.34 291.36)"><g stroke="#fff" stroke-width="3.0"><text x="0" y="0" vector-effect="non-scaling-stroke">E</text></g><g stroke="#000" stroke-width="1.6"><text x="0" y="0" vector-effect="non-scaling-stroke">E</text></g><g stroke="#fff" stroke-width="0.5"><text x="0" y="0" vector-effect="non-scaling-stroke">E</text></g></g><g transform="matrix(0.6615 0.0794 -0.0000 0.5545 745.34 288.96)"><g stroke="#fff" stroke-width="3.0"><text x="0" y="0" vector-effect="non-scaling-stroke">E</text></g><g stroke="#000" stroke-width="1.6"><text x="0" y="0" vector-effect="non-scaling-stroke">E</text></g><g stroke="#fff" stroke-width="0.5"><text x="0" y="0" vector-effect="non-scaling-stroke">E</text></g></g>
</g>
<path d="M298 141 L306 164" stroke="#2020ff" stroke-width="1"/>
<path d="M306 164 L341 132.6" stroke="#d02020" stroke-width="1"/>
<path d="M337.5 128.5 L341 132.6 L346 130 M341 132.6 L342.5 137" stroke="#d02020" stroke-width="0.8" fill="none"/>
<path d="M306 164 L348 175" stroke="#20d020" stroke-width="1"/>
<defs><linearGradient id="cg" x1="0" y1="0" x2="1" y2="0"><stop offset="0" stop-color="#707070"/><stop offset="0.75" stop-color="#9a9a9a"/><stop offset="1" stop-color="#d8d8d8"/></linearGradient></defs>
<path d="M262 83 Q252 88 253 97 Q254 100 257 102 L298 141 L306.5 90 Q308 85 306 83Z" fill="url(#cg)"/>
<rect x="182" y="83" width="115" height="48" fill="#000" opacity="0.72"/>
<g font-family="Liberation Sans" font-weight="bold" font-size="8.6px" fill="#e4e4e4" text-anchor="middle">
<text x="216.32 221.78" y="96.6">X:</text>
<text x="249.47 254.93 260.38 265.82 271.27" y="96.6">0.000</text>
<text x="216.32 221.78" y="107.7">Y:</text>
<text x="249.47 254.93 260.38 265.82 271.27" y="107.7">0.000</text>
<text x="216.32 221.78" y="118.8">Z:</text>
<text x="244.03 249.48 254.93 260.38 265.82 271.28" y="118.8">15.000</text>
<text x="205.42 210.88 216.32 221.77" y="129.9">Vel:</text>
<text x="249.47 254.93 260.38 265.82 271.27" y="129.9">0.000</text>
</g>
<path d="M246 86 L246 97 L248.5 94.5 L250.5 99 L252 98.3 L250 94 L253.5 94Z" fill="#fff" stroke="#000" stroke-width="0.5"/>
<rect x="182" y="82" width="618" height="0.8" fill="#fff" opacity="0.0"/>
</svg>
<div id="code" class="a"></div>

<div class="a ln" style="top:359.5px">1:</div><div class="a cl" style="top:359.5px">(Generated with: DXF2GCODE, Version: PyQt4 Beta, Date: $Date:: 2014-02-11 12:27:10#$)</div>
<div class="a ln" style="top:368.5px">2:</div><div class="a cl" style="top:368.5px">(Created from file: /home/joan/rancho_grande.dxf)</div>
<div class="a ln" style="top:377.5px">3:</div><div class="a cl" style="top:377.5px">(Time: Thu May 15 15:58:23 2014)</div>
<div class="a ln" style="top:386.5px">4:</div><div class="a cl" style="top:386.5px">G21 (Units in millimeters) G90 (Absolute programming) G64 (Default cutting) G17 (XY plane) G40 (Cancel radius comp.) G49 (Cancel length comp.)</div>
<div class="a ln" style="top:395.5px">5:</div><div class="a cl" style="top:395.5px">G0 Z  15.000</div>
<div class="a ln" style="top:404.5px">6:</div>
</body></html>
